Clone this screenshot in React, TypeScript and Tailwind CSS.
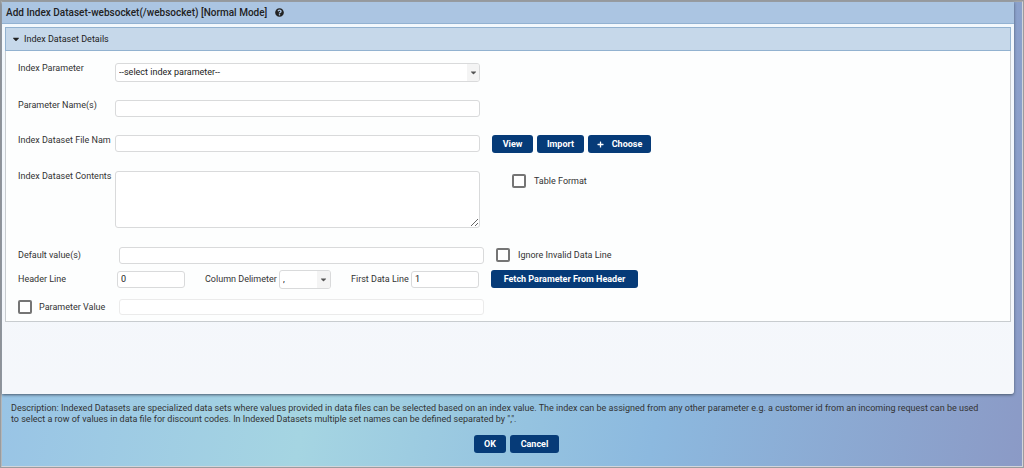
import { useState } from "react"
import type { ReactNode } from "react"
import { FaCaretDown, FaPlus, FaQuestionCircle } from "react-icons/fa"

const field = "rounded-[3px] border border-[#d9dadb] bg-white px-[3px] text-[#222] outline-none focus:border-[#0a3c78]"
const check = "size-[14px] shrink-0 appearance-none rounded-[2px] border-2 border-[#757575] bg-white checked:bg-[#063b78]"

const Button = ({ className, children }: { className: string; children: ReactNode }) => (
  <button
    type="button"
    className={`flex h-[18px] items-center justify-center rounded-[3px] bg-[#063b78] font-bold text-white hover:bg-[#0a4a94] ${className}`}
  >
    {children}
  </button>
)

const Select = ({ id, className, arrow, children }: { id: string; className: string; arrow: string; children: ReactNode }) => (
  <div className={`relative h-[19px] ${className}`}>
    <select id={id} className={`h-full w-full appearance-none ${field}`}>
      {children}
    </select>
    <span className={`pointer-events-none absolute inset-y-px right-px flex items-center justify-center rounded-r-[2px] bg-[#f4f4f4] text-[#555] ${arrow}`}>
      <FaCaretDown className="size-[9px]" />
    </span>
  </div>
)

export default function App() {
  const [useValue, setUseValue] = useState(false)

  return (
    <main className="flex min-h-screen flex-col border border-[#999c9f] font-['Roboto',sans-serif] text-[9px] leading-[11px] text-[#333]">
      <div className="flex flex-1 flex-col border border-t-[#a3a6a9] border-r-[#d3d5da] border-b-[#d3d5da] border-l-[#b4b7ba] bg-[linear-gradient(100deg,#96c0e6_0%,#a5d5e2_34%,#8cb9df_66%,#8b9ac6_100%)]">
        <section className="mr-2 flex flex-1 flex-col rounded-br-[3px] bg-linear-to-b from-[#f2f8fd] to-[#f5f7fb] shadow-[0_1px_3px_#4a5a6c]">
          {/* Title bar */}
          <header className="flex h-[22px] items-center gap-2 border-b border-[#92b2d2] bg-[#abc5e2] px-1 text-[10px] font-medium text-[#222]">
            <h1>Add Index Dataset-websocket(/websocket) [Normal Mode]</h1>
            <button type="button" aria-label="Help">
              <FaQuestionCircle className="size-[9px]" />
            </button>
          </header>

          <div className="mx-[3px] mt-[3px] border border-[#c8cccf] bg-[#fdfefe]">
            <h2 className="-m-px flex h-6 items-center gap-[3px] border border-[#92b2d0] bg-[#c6d8ea] px-[5px] text-[#222]">
              <FaCaretDown className="size-[10px]" />
              Index Dataset Details
            </h2>

            <form className="px-3 pt-[13px] pb-0.5">
              <div className="flex h-[37px] items-start">
                <label htmlFor="index-param" className="w-[97px] shrink-0">Index Parameter</label>
                <Select id="index-param" className="w-[365px]" arrow="w-[12px]">
                  <option>--select index parameter--</option>
                </Select>
              </div>

              <div className="flex h-[35px] items-start">
                <label htmlFor="param-names" className="w-[97px] shrink-0">Parameter Name(s)</label>
                <input id="param-names" className={`h-[17px] w-[365px] ${field}`} />
              </div>

              <div className="flex h-[36px] items-start">
                <label htmlFor="file-name" className="w-[97px] shrink-0 whitespace-nowrap">Index Dataset File Nam</label>
                <input id="file-name" className={`h-[17px] w-[365px] ${field}`} />
                <div className="ml-3 flex gap-1">
                  <Button className="w-[41px]">View</Button>
                  <Button className="w-[47px]">Import</Button>
                  <Button className="w-[63px] gap-2">
                    <FaPlus className="size-[7px]" />
                    Choose
                  </Button>
                </div>
              </div>

              <div className="flex h-[72px] items-start">
                <label htmlFor="contents" className="w-[97px] shrink-0 whitespace-nowrap">Index Dataset Contents</label>
                <textarea id="contents" className={`h-[57px] w-[365px] resize ${field}`} />
                <label className="ml-8 flex items-center gap-2 pt-[3px]">
                  <input type="checkbox" className={check} />
                  Table Format
                </label>
              </div>

              <div className="flex h-6 items-center">
                <label htmlFor="defaults" className="w-[101px] shrink-0">Default value(s)</label>
                <input id="defaults" className={`h-[17px] w-[365px] ${field}`} />
                <label className="ml-3 flex items-center gap-2">
                  <input type="checkbox" className={check} />
                  Ignore Invalid Data Line
                </label>
              </div>

              <div className="flex h-6 items-center">
                <label htmlFor="header-line" className="w-[99px] shrink-0">Header Line</label>
                <input id="header-line" defaultValue="0" className={`h-[17px] w-[68px] ${field}`} />
                <label htmlFor="delimiter" className="ml-5 w-[74px] shrink-0 whitespace-nowrap">Column Delimeter</label>
                <Select id="delimiter" className="w-[52px]" arrow="w-[13px]">
                  <option>,</option>
                </Select>
                <label htmlFor="first-line" className="ml-5 w-[60px] shrink-0 whitespace-nowrap">First Data Line</label>
                <input id="first-line" defaultValue="1" className={`h-[17px] w-[68px] ${field}`} />
                <Button className="ml-3 w-[147px]">Fetch Parameter From Header</Button>
              </div>

              <div className="mt-1 flex h-6 items-center">
                <label className="flex w-[101px] shrink-0 items-center gap-[7px]">
                  <input type="checkbox" checked={useValue} onChange={(e) => setUseValue(e.target.checked)} className={check} />
                  Parameter Value
                </label>
                <input aria-label="Parameter Value" disabled={!useValue} className={`h-4 w-[365px] ${field} disabled:border-[#ebebeb]`} />
              </div>
            </form>
          </div>
        </section>

        <footer className="pt-[9px] pb-[13px] pl-[9px]">
          <p className="pr-9">
            Description: Indexed Datasets are specialized data sets where values provided in data files can be selected based on an index value. The index can be assigned from any other parameter e.g. a customer id from an incoming request can be used to select a row of values in data file for discount codes. In Indexed Datasets multiple set names can be defined separated by ",".
          </p>
          <div className="mt-[10px] flex justify-center gap-1">
            <Button className="w-8">OK</Button>
            <Button className="w-[49px]">Cancel</Button>
          </div>
        </footer>
      </div>
    </main>
  )
}
